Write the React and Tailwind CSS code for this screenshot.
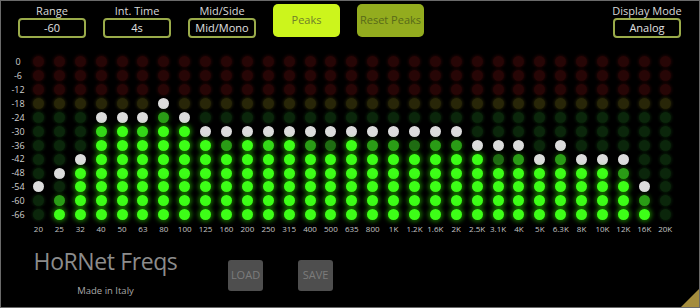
import React from 'react';

const rowLabels = ["0", "-6", "-12", "-18", "-24", "-30", "-36", "-42", "-48", "-54", "-60", "-66"];

// one string per band, top row first: o = off, d/m/n = partly lit, b = lit, p = peak
const bands = [
  ["20", "ooooooooopoo"],
  ["25", "oooooooopomb"],
  ["32", "ooooooopbbbb"],
  ["40", "oooopnbbbbbb"],
  ["50", "oooopbbbbbbb"],
  ["63", "oooopnbbbbbb"],
  ["80", "ooopmbbbbbbb"],
  ["100", "oooopbbbbbbb"],
  ["125", "ooooopbbbbbb"],
  ["160", "ooooopmbbbbb"],
  ["200", "ooooopbbbbbb"],
  ["250", "ooooopnbbbbb"],
  ["315", "ooooopbbbbbb"],
  ["400", "ooooopmbbbbb"],
  ["500", "ooooopdbbbbb"],
  ["635", "ooooopbbbbbb"],
  ["800", "ooooopmbbbbb"],
  ["1K", "ooooopmbbbbb"],
  ["1.2K", "ooooopdbbbbb"],
  ["1.6K", "ooooopmbbbbb"],
  ["2K", "ooooopmbbbbb"],
  ["2.5K", "oooooopbbbbb"],
  ["3.1K", "oooooopdbbbb"],
  ["4K", "oooooopmbbbb"],
  ["5K", "ooooooopbbbb"],
  ["6.3K", "oooooopmbbbb"],
  ["8K", "ooooooopbbbb"],
  ["10K", "ooooooopbbbb"],
  ["12K", "ooooooopmbbb"],
  ["16K", "ooooooooopmb"],
  ["20K", "oooooooooooo"],
];

const offClass = (row) => {
  if (row < 3) return "bg-[#270606] shadow-[0_0_3px_1px_#1e0505]";
  if (row === 3) return "bg-[#282608] shadow-[0_0_3px_1px_#1f1d06]";
  return "bg-[#0b260b] shadow-[0_0_3px_1px_#081d08]";
};

const dotClass = (state, row) => {
  switch (state) {
    case "p":
      return "bg-[#dcdcdc]";
    case "b":
      return "bg-[#3dff17] shadow-[0_0_4px_2px_rgba(40,190,0,0.55)]";
    case "n":
      return "bg-[#34d818] shadow-[0_0_4px_2px_rgba(30,150,0,0.5)]";
    case "m":
      return "bg-[#2a9c16] shadow-[0_0_4px_1px_rgba(30,120,0,0.5)]";
    case "d":
      return "bg-[#1f6c12] shadow-[0_0_4px_1px_rgba(25,90,0,0.5)]";
    default:
      return offClass(row);
  }
};

const Control = ({ label, value }) => (
  <div className="flex flex-col items-center w-[68px]">
    <div className="h-[12px] leading-[12px] text-[11px] text-[#d8d8d8] whitespace-nowrap">{label}</div>
    <div className="w-full h-[20px] mt-[1px] border-2 border-[#9aab4a] rounded-[4px] flex items-center justify-center text-[11px] text-[#e0e0e0]">
      {value}
    </div>
  </div>
);

const App = () => {
  return (
    <div
      className="relative w-[700px] h-[308px] bg-black border border-[#6a6a6a] overflow-hidden"
      style={{ fontFamily: '"Open Sans", "Noto Sans", sans-serif' }}
    >
      {/* Top controls */}
      <div className="flex items-start pt-[4px] pl-[17px] pr-[18px]">
        <Control label="Range" value="-60" />
        <div className="ml-[17px]">
          <Control label="Int. Time" value="4s" />
        </div>
        <div className="ml-[17px]">
          <Control label="Mid/Side" value="Mid/Mono" />
        </div>
        <button className="ml-[17px] -mt-px w-[67px] h-[33px] rounded-[5px] bg-[#ccf51c] text-[11px] text-[#6f7f2a] flex items-center justify-center">
          Peaks
        </button>
        <button className="ml-[17px] -mt-px w-[67px] h-[33px] rounded-[5px] bg-[#93ac1e] text-[11px] text-[#586a18] flex items-center justify-center whitespace-nowrap">
          Reset Peaks
        </button>
        <div className="ml-auto">
          <Control label="Display Mode" value="Analog" />
        </div>
      </div>

      {/* Meter grid */}
      <div className="flex mt-[17px]">
        <div className="w-[34px] flex flex-col">
          {rowLabels.map((l) => (
            <div key={l} className="h-[13.9px] flex items-center justify-center text-[9px] text-[#cfcfcf]">
              {l}
            </div>
          ))}
        </div>
        <div className="flex -ml-[7px]">
          {bands.map(([freq, states]) => (
            <div key={freq} className="w-[20.9px] flex flex-col items-center">
              {states.split("").map((s, r) => (
                <div key={r} className="h-[13.9px] flex items-center justify-center">
                  <div className={`w-[11px] h-[11px] rounded-full ${dotClass(s, r)}`}></div>
                </div>
              ))}
              <div className="h-[14px] flex items-center justify-center text-[8px] text-[#c4c4c4] whitespace-nowrap">
                {freq}
              </div>
            </div>
          ))}
        </div>
      </div>

      {/* Bottom */}
      <div className="flex items-start mt-[12px]">
        <div className="ml-[31px] w-[147px] flex flex-col items-center">
          <div className="text-[23px] leading-[26px] text-[#8c8c8c] tracking-[-0.4px] whitespace-nowrap">HoRNet Freqs</div>
          <div className="mt-[10px] text-[9.5px] text-[#a8a8a8]">Made in Italy</div>
        </div>
        <button className="ml-[49px] mt-[12px] w-[35px] h-[31px] rounded-[3px] bg-[#4e4e4e] text-[11px] text-[#7c7c7c] flex items-center justify-center">
          LOAD
        </button>
        <button className="ml-[35px] mt-[12px] w-[35px] h-[31px] rounded-[3px] bg-[#4e4e4e] text-[11px] text-[#7c7c7c] flex items-center justify-center">
          SAVE
        </button>
      </div>

      {/* resize handle */}
      <svg className="absolute right-0 bottom-0" width="18" height="18" viewBox="0 0 18 18">
        <polygon points="18,0 18,18 0,18" fill="#a58d3e" />
      </svg>
    </div>
  );
};

export default App;
